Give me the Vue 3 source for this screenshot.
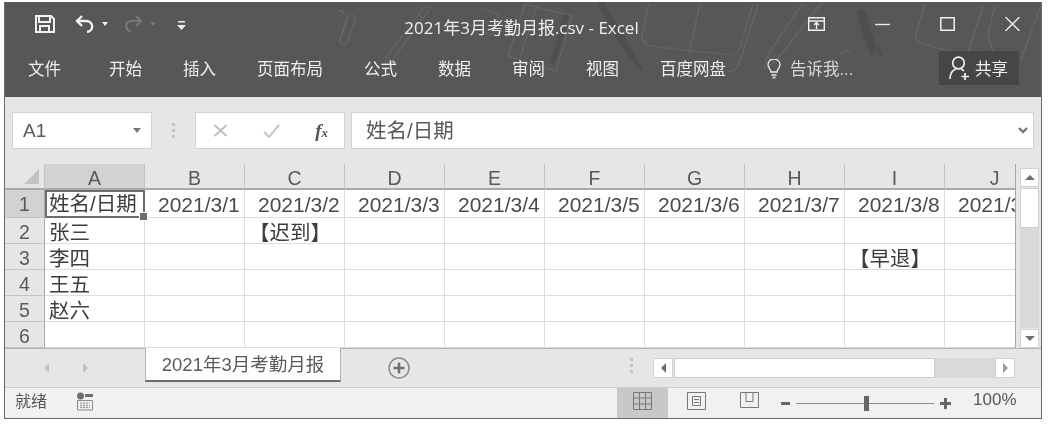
<template>
  <div class="page">
    <div class="window">
      <!-- title bar + ribbon tabs -->
      <header class="titlebar">
        <svg class="decor" width="1038" height="95" viewBox="0 0 1038 95" fill="none">
          <g transform="translate(-5,-2)" stroke="#666" stroke-width="1.2" stroke-linecap="round">
            <path d="M347 17l-7 22c-1 5 6 7 8 2l7-22c1-4-5-6-7-2l-6 18M338 11c3-1 5 0 6 3" />
            <path d="M425 6l-38 50 4 6 38-52M387 56l-2 8 6-2M418 14l5 5" />
            <path d="M483 9l16 6-7 20-11-3" />
            <path d="M525 4l47 12-16 55-48-15zM537 6l-17 52" />
            <path d="M649 3l-7 32c-1 6 2 9 8 11l80 9c6 0 8-3 10-8l13-43M700 3l-11 51M758 4l-18 58c-2 7-6 10-14 10" />
            <path d="M802 4l-35 52-3 13 10-6 49-62M767 56l7 7" />
            <path d="M925 4l-9 30c-1 4 1 7 5 9l44 13M983 6l-15 46M995 5l-7 30 6 20M1041 5l-20 55" />
            <path d="M840 55c3-5 7-6 10-1" />
          </g>
          <g transform="translate(-5,-2)" stroke="#4f4f4f" stroke-linecap="round">
            <path d="M566 17l-13 45" stroke-width="5" />
            <path d="M602 6l30 50" stroke-width="7" />
            <path d="M632 56l9 13" stroke-width="2.5" />
            <path d="M861 13l11 35" stroke-width="9" />
            <path d="M871 48l1 9M878 46l3 10" stroke-width="2" />
          </g>
        </svg>

        <div class="title-row">
          <div class="qat">
            <svg class="ico-save" width="20" height="18" viewBox="0 0 20 18" fill="none" stroke="#f2f2f2" stroke-width="2">
              <path d="M1 1h15l3 3v13H1z" />
              <path d="M4 1v6h11V1M5 17v-6h9v6" />
            </svg>
            <svg class="ico-undo" width="20" height="18" viewBox="0 0 20 18" fill="none" stroke="#f2f2f2" stroke-width="2.4">
              <path d="M7 1L2 6l5 5" />
              <path d="M2 6h9c8 0 8 10 1 11" />
            </svg>
            <span class="arrow-down on"></span>
            <svg class="ico-redo" width="20" height="18" viewBox="0 0 20 18" fill="none" stroke="#777" stroke-width="2.2">
              <path d="M13 1l5 5-5 5" />
              <path d="M18 6H9C2 6 1 14 8 17" />
            </svg>
            <span class="arrow-down"></span>
            <svg class="ico-more" width="9" height="9" viewBox="0 0 9 9" fill="#ececec">
              <path d="M1 0h7v1.5H1zM0 4h9L4.5 9z" />
            </svg>
          </div>
          <div class="doc-title">2021年3月考勤月报.csv - Excel</div>
          <div class="win-btns">
            <svg width="17" height="14" viewBox="0 0 17 14" fill="none" stroke="#f0f0f0" stroke-width="1.4">
              <path d="M.7.7h15.6v12.6H.7zM.7 4h15.6" />
              <path d="M8.5 12V6M6 8l2.5-2.5L11 8" />
            </svg>
            <svg width="15" height="14" viewBox="0 0 15 14" stroke="#e8e8e8" stroke-width="1.4"><path d="M0 7.5h15" /></svg>
            <svg width="15" height="14" viewBox="0 0 15 14" fill="none" stroke="#f0f0f0" stroke-width="1.5"><path d="M.8.8h13.4v12.4H.8z" /></svg>
            <svg width="15" height="14" viewBox="0 0 15 14" fill="none" stroke="#f0f0f0" stroke-width="1.4"><path d="M.5 0l14 14M14.5 0L.5 14" /></svg>
          </div>
        </div>

        <nav class="tab-row">
          <span v-for="t in ribbonTabs" :key="t" class="rtab">{{ t }}</span>
          <span class="tell">
            <svg width="14" height="20" viewBox="0 0 14 20" fill="none" stroke="#efefef" stroke-width="1.3">
              <path d="M4 13c0-3-3-4-3-7.500a6 5.500 0 0 1 12 0c0 3.500-3 4.500-3 7.500z" />
              <path d="M4.500 16h5M5.500 18.500h3" />
            </svg>
            <span>告诉我...</span>
          </span>
          <span class="share">
            <svg width="22" height="24" viewBox="0 0 22 24" fill="none" stroke="#f2f2f2" stroke-width="1.7">
              <circle cx="9.500" cy="7" r="5.800" />
              <path d="M1 23c0-6 3-9 6-10M12 13c1 .3 2 1 3 2M16 17v7M12.500 20.500h7.500" />
            </svg>
            <span>共享</span>
          </span>
        </nav>
      </header>

      <!-- formula bar -->
      <section class="formula-bar">
        <div class="name-box">
          <span>A1</span>
          <span class="caret"></span>
        </div>
        <div class="grip"><i></i><i></i><i></i></div>
        <div class="fx-box">
          <svg width="15" height="13" viewBox="0 0 15 13" fill="none" stroke="#bdbdbd" stroke-width="1.8"><path d="M1.500 1l12 11M13.500 1l-12 11" /></svg>
          <svg width="17" height="14" viewBox="0 0 17 14" fill="none" stroke="#c6c6c6" stroke-width="2"><path d="M1 8l5 5L16 1" /></svg>
          <span class="fx">f<small>x</small></span>
        </div>
        <div class="formula-input">
          <span class="formula-text">姓名/日期</span>
          <svg width="10" height="7" viewBox="0 0 10 7" fill="none" stroke="#777" stroke-width="2.4"><path d="M1 1l4 4 4-4" /></svg>
        </div>
      </section>

      <!-- sheet -->
      <section class="sheet">
        <div class="grid">
          <div class="corner"><span></span></div>
          <div
            v-for="(c, i) in columns"
            :key="c"
            class="col-head"
            :class="{ active: i === 0 }"
          >{{ c }}</div>
          <template v-for="(row, r) in rows" :key="r">
            <div class="row-head" :class="{ active: r === 0 }">{{ r + 1 }}</div>
            <div
              v-for="(val, k) in row"
              :key="k"
              class="cell"
              :class="{ date: r === 0 && k > 0, selected: r === 0 && k === 0 }"
            >{{ val }}<i v-if="r === 0 && k === 0" class="handle"></i></div>
          </template>
        </div>
        <div class="vscroll">
          <div class="sb-btn"><span class="tri up"></span></div>
          <div class="v-track"><div class="v-thumb"></div></div>
          <div class="sb-btn"><span class="tri dn"></span></div>
        </div>
      </section>

      <!-- sheet tabs -->
      <section class="sheet-bar">
        <div class="nav">
          <span class="tri lf pale"></span>
          <span class="tri rt pale"></span>
        </div>
        <div class="sheet-tab">2021年3月考勤月报</div>
        <svg class="add" width="22" height="22" viewBox="0 0 22 22" fill="none" stroke="#8b8b8b">
          <circle cx="11" cy="11" r="10" stroke-width="1.500" />
          <path d="M11 5.500v11M5.500 11h11" stroke="#6f6f6f" stroke-width="2.500" />
        </svg>
        <div class="grip bar-grip"><i></i><i></i><i></i></div>
        <div class="hscroll">
          <div class="h-btn"><span class="tri lf"></span></div>
          <div class="h-thumb"></div>
          <div class="h-track"></div>
          <div class="h-btn"><span class="tri rt pale2"></span></div>
        </div>
      </section>

      <!-- status bar -->
      <footer class="status">
        <span class="ready">就绪</span>
        <svg class="macro" width="18" height="19" viewBox="0 0 18 19" fill="none">
          <circle cx="4.500" cy="4" r="3.500" fill="#6e6e6e" />
          <path d="M9 2h8v3H9z" fill="#6e6e6e" />
          <path d="M1.500 8.500h15v9.500h-15z" stroke="#8a8a8a" />
          <path d="M4 11h10M4 13.300h10M4 15.600h10" stroke="#8a8a8a" stroke-dasharray="2 1" />
        </svg>
        <div class="views">
          <div class="view active">
            <svg width="19" height="18" viewBox="0 0 19 18" fill="none" stroke="#777"><path d="M.5.500h18v17H.5zM.5 6h18M.5 12h18M6.500.500v17M12.500.500v17" /></svg>
          </div>
          <div class="view">
            <svg width="19" height="18" viewBox="0 0 19 18" fill="none" stroke="#777"><path d="M.5.500h18v17H.5zM5.500 4.500h8v9h-8zM7 7.500h5M7 10.500h5" /></svg>
          </div>
          <div class="view">
            <svg width="19" height="18" viewBox="0 0 19 18" fill="none" stroke="#777"><path d="M.5.500h18v15H.5zM6 .500v9h7v-9" /></svg>
          </div>
        </div>
        <div class="zoom">
          <span class="z-minus"></span>
          <div class="z-track"><span class="z-thumb"></span></div>
          <span class="z-plus"></span>
        </div>
        <span class="pct">100%</span>
      </footer>
    </div>
  </div>
</template>

<script setup>
const ribbonTabs = ['文件', '开始', '插入', '页面布局', '公式', '数据', '审阅', '视图', '百度网盘']
const columns = ['A', 'B', 'C', 'D', 'E', 'F', 'G', 'H', 'I', 'J']

const blank = () => Array(10).fill('')
const withCell = (name, idx, text) => {
  const row = blank()
  row[0] = name
  if (idx) row[idx] = text
  return row
}

const rows = [
  ['姓名/日期', ...[1, 2, 3, 4, 5, 6, 7, 8, 9].map((d) => `2021/3/${d}`)],
  withCell('张三', 2, '【迟到】'),
  withCell('李四', 8, '【早退】'),
  withCell('王五'),
  withCell('赵六'),
  blank()
]
</script>

<style>
html, body {
  background: #fff;
}
</style>

<style scoped>
.page {
  width: 1052px;
  height: 425px;
  box-sizing: border-box;
  padding: 2px 10px 6px 4px;
  font-family: "Liberation Sans", "Noto Sans CJK SC", sans-serif;
  filter: blur(0.55px);
  overflow: hidden;
}

.window {
  height: 100%;
  display: flex;
  flex-direction: column;
  border: 1px solid #6b6b6b;
  border-top: 0;
  border-bottom-width: 2px;
  box-sizing: border-box;
  background: #e6e6e6;
}

/* title */
.titlebar {
  position: relative;
  height: 95px;
  background: #575757;
  color: #efefef;
  flex: none;
}
.decor {
  position: absolute;
  left: 0;
  top: 0;
}
.title-row {
  position: relative;
  height: 44px;
  display: grid;
  grid-template-columns: 1fr auto 1fr;
  align-items: center;
}
.qat {
  display: flex;
  align-items: center;
  padding-left: 30px;
}
.ico-undo {
  margin-left: 20px;
}
.arrow-down {
  width: 0;
  height: 0;
  border-left: 3px solid transparent;
  border-right: 3px solid transparent;
  border-top: 4px solid #777;
  margin-left: 7px;
}
.arrow-down.on {
  border-top-color: #efefef;
}
.ico-redo {
  margin-left: 15px;
}
.ico-more {
  margin-left: 21px;
  margin-top: 3px;
}
.doc-title {
  font-size: 17px;
  font-family: "Open Sans", "Noto Sans CJK SC", sans-serif;
  line-height: 24px;
  padding-top: 8px;
  padding-right: 3px;
}
.win-btns {
  display: flex;
  justify-content: flex-end;
  align-items: center;
  gap: 50px;
  padding-right: 21px;
}
.tab-row {
  position: relative;
  height: 44px;
  display: flex;
  align-items: center;
  gap: 41px;
  padding-left: 23px;
  font-size: 16.5px;
}
.rtab:first-child {
  margin-right: 7px;
}
.tell {
  display: flex;
  align-items: center;
  gap: 9px;
  color: #d8d8d8;
}
.tell svg {
  margin-top: 2px;
}
.share {
  margin-left: auto;
  margin-right: 22px;
  width: 80px;
  height: 34px;
  background: #464646;
  display: flex;
  align-items: center;
  gap: 4px;
  padding-left: 10px;
  box-sizing: border-box;
  color: #f2f2f2;
}

/* formula bar */
.formula-bar {
  flex: none;
  height: 67px;
  box-sizing: border-box;
  padding: 15px 7px 15px 7px;
  display: flex;
}
.name-box,
.fx-box,
.formula-input {
  background: #fff;
  border: 1px solid #d3d3d3;
  box-sizing: border-box;
  display: flex;
  align-items: center;
}
.name-box {
  width: 140px;
  padding: 0 10px;
  justify-content: space-between;
  font-size: 19px;
  color: #595959;
}
.caret {
  border-left: 4px solid transparent;
  border-right: 4px solid transparent;
  border-top: 5px solid #777;
}
.grip {
  display: flex;
  flex-direction: column;
  justify-content: center;
  gap: 3px;
  width: 3px;
}
.grip i {
  height: 3px;
  background: #c4c4c4;
}
.formula-bar .grip {
  margin: 0 20px;
}
.fx-box {
  width: 150px;
  padding: 0 16px 0 17px;
  justify-content: space-between;
  margin-right: 6px;
}
.fx {
  font-family: "Liberation Serif", serif;
  font-style: italic;
  font-weight: 700;
  font-size: 19px;
  color: #555;
}
.fx small {
  font-size: 13px;
}
.formula-input {
  flex: 1;
  padding: 0 5px 0 14px;
  justify-content: space-between;
  font-size: 20.5px;
  color: #595959;
}
.formula-text {
  padding-bottom: 3px;
}

/* sheet */
.sheet {
  flex: none;
  height: 184px;
  display: flex;
  background: #e6e6e6;
}
.grid {
  width: 1011px;
  flex: none;
  display: grid;
  /* column J runs past the scrollbar and gets clipped, as in the sheet */
  grid-template-columns: 40px repeat(10, 100px);
  grid-template-rows: 26px repeat(6, 1fr);
  overflow: hidden;
  background: #fff;
  border-right: 1px solid #a6a6a6;
  box-sizing: border-box;
}
.corner {
  background: #e6e6e6;
  border-bottom: 2px solid #a9a9a9;
  border-right: 1px solid #c4c4c4;
  box-sizing: border-box;
  position: relative;
}
.corner span {
  position: absolute;
  right: 5px;
  bottom: 4px;
  border-left: 15px solid transparent;
  border-bottom: 15px solid #c3c3c3;
}
.col-head {
  background: #e6e6e6;
  border-bottom: 2px solid #a9a9a9;
  border-right: 1px solid #c4c4c4;
  box-sizing: border-box;
  text-align: center;
  font-size: 19.5px;
  line-height: 26px;
  color: #595959;
  padding-top: 1px;
}
.col-head.active {
  background: #d2d2d2;
}
.row-head {
  background: #e6e6e6;
  border-bottom: 1px solid #c4c4c4;
  border-right: 1px solid #a9a9a9;
  box-sizing: border-box;
  text-align: center;
  font-size: 19.5px;
  line-height: 29px;
  color: #595959;
  overflow: hidden;
}
.row-head.active {
  background: #d2d2d2;
}
.cell {
  position: relative;
  border-right: 1px solid #dcdcdc;
  border-bottom: 1px solid #dcdcdc;
  box-sizing: border-box;
  font-size: 20.5px;
  line-height: 29px;
  color: #3d3d3d;
  padding-left: 4px;
  white-space: nowrap;
  overflow: hidden;
}
.cell.date {
  padding-left: 13px;
  font-size: 21px;
  color: #4a4a4a;
}
.cell.selected {
  overflow: visible;
  outline: 2px solid #6c6c6c;
  outline-offset: -2px;
  z-index: 1;
  line-height: 27px;
}
.handle {
  position: absolute;
  right: -4px;
  bottom: -4px;
  width: 7px;
  height: 7px;
  background: #6c6c6c;
  border: 1px solid #fff;
}
.vscroll {
  flex: 1;
  display: flex;
  flex-direction: column;
  padding: 4px 2px 0 4px;
  gap: 1px;
}
.sb-btn {
  height: 19px;
  background: #fff;
  border: 1px solid #d3d3d3;
  box-sizing: border-box;
  display: flex;
  align-items: center;
  justify-content: center;
  flex: none;
}
.v-track {
  flex: 1;
  background: #d9d9d9;
}
.v-thumb {
  height: 40px;
  background: #fff;
  border: 1px solid #cdcdcd;
  box-sizing: border-box;
}
.tri {
  width: 0;
  height: 0;
  display: block;
}
.tri.up {
  border-left: 5px solid transparent;
  border-right: 5px solid transparent;
  border-bottom: 5px solid #6e6e6e;
}
.tri.dn {
  border-left: 5px solid transparent;
  border-right: 5px solid transparent;
  border-top: 5px solid #6e6e6e;
}
.tri.lf {
  border-top: 5px solid transparent;
  border-bottom: 5px solid transparent;
  border-right: 5px solid #6e6e6e;
}
.tri.rt {
  border-top: 5px solid transparent;
  border-bottom: 5px solid transparent;
  border-left: 5px solid #6e6e6e;
}
.tri.lf.pale {
  border-right-color: #c0c0c0;
}
.tri.rt.pale {
  border-left-color: #c0c0c0;
}
.tri.rt.pale2 {
  border-left-color: #999;
}

/* sheet tabs */
.sheet-bar {
  flex: none;
  height: 39px;
  display: flex;
  align-items: flex-start;
  border-top: 1px solid #b4b4b4;
  box-sizing: border-box;
}
.nav {
  width: 140px;
  height: 37px;
  display: flex;
  align-items: center;
  gap: 34px;
  padding-left: 39px;
  box-sizing: border-box;
  flex: none;
}
.sheet-tab {
  width: 196px;
  height: 34px;
  margin-top: -1px;
  background: #fff;
  border: 1px solid #b4b4b4;
  border-top: 0;
  border-bottom: 2px solid #6c6c6c;
  box-sizing: border-box;
  text-align: center;
  font-size: 18.5px;
  line-height: 33px;
  color: #5a5a5a;
  flex: none;
}
.add {
  margin: 8px 0 0 47px;
  flex: none;
}
.bar-grip {
  margin: 9px 0 0 220px;
  flex: none;
}
.hscroll {
  margin: 9px 0 0 20px;
  width: 362px;
  height: 20px;
  display: flex;
  flex: none;
}
.h-btn {
  width: 20px;
  background: #fff;
  border: 1px solid #d3d3d3;
  box-sizing: border-box;
  display: flex;
  align-items: center;
  justify-content: center;
  flex: none;
}
.h-thumb {
  width: 261px;
  background: #fff;
  border: 1px solid #cdcdcd;
  box-sizing: border-box;
  margin-left: 1px;
}
.h-track {
  flex: 1;
  background: #d9d9d9;
}

/* status */
.status {
  flex: 1;
  background: #f1f1f1;
  border-top: 1px solid #cbcbcb;
  display: flex;
  align-items: center;
  color: #565656;
}
.ready {
  font-size: 16px;
  margin-left: 10px;
  padding-bottom: 6px;
}
.macro {
  margin-left: 29px;
  margin-bottom: 4px;
}
.views {
  margin-left: 523px;
  display: flex;
  align-self: stretch;
}
.view {
  width: 53px;
  display: flex;
  align-items: center;
  justify-content: center;
  padding-bottom: 4px;
}
.view:nth-child(2) {
  padding-left: 3px;
  box-sizing: border-box;
}
.view:nth-child(3) {
  padding-left: 4px;
  box-sizing: border-box;
}
.view.active {
  background: #c8c8c8;
  width: 51px;
}
.zoom {
  margin-left: 7px;
  display: flex;
  align-items: center;
  gap: 6px;
}
.z-minus {
  width: 9px;
  height: 3px;
  background: #666;
}
.z-track {
  width: 138px;
  height: 1px;
  background: #8c8c8c;
  position: relative;
}
.z-thumb {
  position: absolute;
  left: 68px;
  top: -7px;
  width: 5px;
  height: 15px;
  background: #666;
}
.z-plus {
  width: 11px;
  height: 11px;
  background:
    linear-gradient(#666, #666) center / 11px 3px no-repeat,
    linear-gradient(#666, #666) center / 3px 11px no-repeat;
}
.pct {
  margin-left: 22px;
  font-size: 17px;
  padding-bottom: 6px;
}
</style>
